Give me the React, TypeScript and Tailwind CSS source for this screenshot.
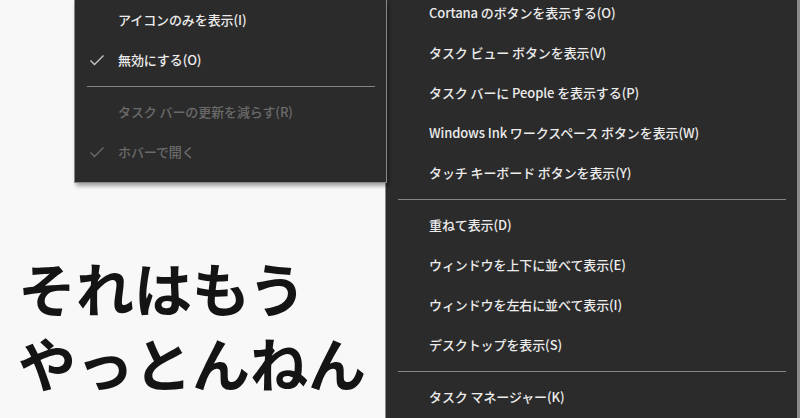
const jp = { fontFamily: '"Noto Sans CJK JP", "Noto Sans", sans-serif' }

type Item = { label: string; checked?: boolean; disabled?: boolean } | 'sep'

const leftItems: Item[] = [
  { label: 'アイコンのみを表示(I)' },
  { label: '無効にする(O)', checked: true },
  'sep',
  { label: 'タスク バーの更新を減らす(R)', disabled: true },
  { label: 'ホバーで開く', checked: true, disabled: true },
]

const rightItems: Item[] = [
  { label: 'Cortana のボタンを表示する(O)' },
  { label: 'タスク ビュー ボタンを表示(V)' },
  { label: 'タスク バーに People を表示する(P)' },
  { label: 'Windows Ink ワークスペース ボタンを表示(W)' },
  { label: 'タッチ キーボード ボタンを表示(Y)' },
  'sep',
  { label: '重ねて表示(D)' },
  { label: 'ウィンドウを上下に並べて表示(E)' },
  { label: 'ウィンドウを左右に並べて表示(I)' },
  { label: 'デスクトップを表示(S)' },
  'sep',
  { label: 'タスク マネージャー(K)' },
]

function Check({ color }: { color: string }) {
  return (
    <svg width="16" height="12" viewBox="0 0 16 12" className="absolute left-[14px] top-[14px]">
      <path d="M1.5 6.5 L5.5 10.5 L14.5 1.5" fill="none" stroke={color} strokeWidth="1.3" />
    </svg>
  )
}

function MenuRows({ items }: { items: Item[] }) {
  return (
    <>
      {items.map((item, i) =>
        item === 'sep' ? (
          <div key={i} className="h-[12px] flex items-center pl-[12px] pr-[11px]">
            <div className="h-px w-full bg-[#858585]" />
          </div>
        ) : (
          <div
            key={i}
            className={`relative h-[40px] flex items-center pl-[43px] text-[13px] font-medium tracking-[-0.1px] whitespace-nowrap ${
              item.disabled ? 'text-[#6a6a6a]' : 'text-[#ececec]'
            }`}
          >
            {item.checked && <Check color={item.disabled ? '#6a6a6a' : '#c8c8c8'} />}
            {item.label}
          </div>
        )
      )}
    </>
  )
}

export default function App() {
  return (
    <div className="w-[800px] h-[418px] bg-[#f8f8f8] flex overflow-hidden" style={jp}>
      {/* left side: flyout + caption */}
      <div className="w-[385px] flex flex-col shrink-0">
        <div className="ml-[74px] w-[313px] h-[183px] bg-[#2b2b2b] border-l border-r border-b border-[#8a8a8a] shadow-[2px_3px_4px_rgba(0,0,0,0.35)] relative z-10 flex flex-col">
          <MenuRows items={leftItems} />
        </div>
        <div className="mt-[75px] pl-[18px] flex flex-col gap-[17px] text-[58px] leading-[58px] font-bold text-[#141414] whitespace-nowrap">
          <div>それはもう</div>
          <div>やっとんねん</div>
        </div>
      </div>

      {/* right side: taskbar context menu */}
      <div className="flex-1 h-full bg-[#2b2b2b] border-l border-r-[3px] border-[#8a8a8a] overflow-hidden">
        <div className="-mt-[7px] flex flex-col">
          <MenuRows items={rightItems} />
        </div>
      </div>
    </div>
  )
}
